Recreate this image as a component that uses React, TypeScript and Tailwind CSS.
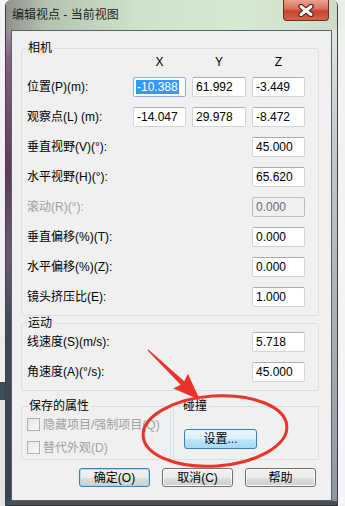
import React from 'react';

const FONT = "[font-family:'Liberation_Sans','Noto_Sans_CJK_SC',sans-serif]";

type Row = { label: string; values: string[]; disabled?: boolean };

const cameraRows: Row[] = [
  { label: '位置(P)(m):', values: ['-10.388', '61.992', '-3.449'] },
  { label: '观察点(L) (m):', values: ['-14.047', '29.978', '-8.472'] },
  { label: '垂直视野(V)(°):', values: ['45.000'] },
  { label: '水平视野(H)(°):', values: ['65.620'] },
  { label: '滚动(R)(°):', values: ['0.000'], disabled: true },
  { label: '垂直偏移(%)(T):', values: ['0.000'] },
  { label: '水平偏移(%)(Z):', values: ['0.000'] },
  { label: '镜头挤压比(E):', values: ['1.000'] },
];

const motionRows: Row[] = [
  { label: '线速度(S)(m/s):', values: ['5.718'] },
  { label: '角速度(A)(°/s):', values: ['45.000'] },
];

const GRID = 'grid grid-cols-[100px_53px_54px_53px] gap-x-[6px]';

const TextBox: React.FC<{ value: string; selected?: boolean; disabled?: boolean; className?: string }> = ({
  value,
  selected,
  disabled,
  className = '',
}) => {
  const look = disabled
    ? 'bg-[#f0f0f0] border-[#b9bcc0] text-[#6d6d6d]'
    : selected
      ? 'bg-white border-[#8fb0d3] text-black'
      : 'bg-white border-[#d0d5da] border-t-[#abadb3] text-black';
  return (
    <div className={`h-[20px] flex items-center px-[3px] border rounded-[2px] text-[12px] leading-[14px] ${look} ${className}`}>
      {selected ? <span className="bg-[#3399ff] text-white -ml-[1px] px-[1px] leading-[14px]">{value}</span> : value}
    </div>
  );
};

const Group: React.FC<{ title: string; className?: string; legendClass?: string; children: React.ReactNode }> = ({
  title,
  className = '',
  legendClass = '',
  children,
}) => (
  <fieldset className={`border border-[#d5dfe5] rounded-[3px] px-[4px] ${className}`}>
    <legend className={`px-[2px] text-[12px] leading-[13px] text-black ${legendClass}`}>{title}</legend>
    {children}
  </fieldset>
);

const Rows: React.FC<{ rows: Row[] }> = ({ rows }) => (
  <div className={`${GRID} gap-y-[10px] pl-[1px]`}>
    {rows.map((row) => (
      <React.Fragment key={row.label}>
        <div className={`col-start-1 h-[20px] flex items-center whitespace-nowrap text-[12px] ${row.disabled ? 'text-[#a0a0a0]' : 'text-black'}`}>
          {row.label}
        </div>
        {row.values.length === 3 ? (
          row.values.map((v, i) => <TextBox key={v} value={v} selected={row.label.startsWith('位置') && i === 0} />)
        ) : (
          <TextBox value={row.values[0]} disabled={row.disabled} className="col-start-4" />
        )}
      </React.Fragment>
    ))}
  </div>
);

const Checkbox: React.FC<{ label: string }> = ({ label }) => (
  <div className="h-[15px] flex items-center pl-[1px]">
    <div className="w-[13px] h-[13px] border border-[#b1b1b1] bg-gradient-to-br from-[#e6e6e6] to-[#fafafa]" />
    <span className="ml-[3px] text-[12px] text-[#a0a0a0] whitespace-nowrap">{label}</span>
  </div>
);

const Button: React.FC<{ label: string; variant?: 'normal' | 'default' | 'hot'; className?: string }> = ({
  label,
  variant = 'normal',
  className = '',
}) => {
  const look =
    variant === 'hot'
      ? 'border-[#3c7fb1] bg-[linear-gradient(180deg,#eaf6fd_0%,#d9f0fc_50%,#bee6fd_51%,#a7d9f5_100%)]'
      : variant === 'default'
        ? 'border-[#3c7fb1] bg-[linear-gradient(180deg,#f2f2f2_0%,#ebebeb_50%,#dddddd_51%,#cfcfcf_100%)] shadow-[inset_0_0_0_1px_#a6dcf5]'
        : 'border-[#707070] bg-[linear-gradient(180deg,#f2f2f2_0%,#ebebeb_50%,#dddddd_51%,#cfcfcf_100%)] shadow-[inset_0_0_0_1px_#fcfcfc]';
  return (
    <div className={`flex items-center justify-center border rounded-[3px] text-[12px] text-black ${look} ${className}`}>
      {label}
    </div>
  );
};

const App: React.FC = () => {
  return (
    <div className={`relative w-[345px] h-[506px] overflow-hidden bg-white flex ${FONT}`}>
      <div className="w-[5px] h-full bg-[linear-gradient(180deg,#f3f3f3_0px,#eeeeee_382px,#3e4d5c_382px,#3e4d5c_400px,#e4e4e4_400px)]" />

      <div className="w-[333px] h-[506px] flex flex-col border-x border-[#3b4147] rounded-t-[6px] overflow-hidden">
        <div className="h-[30px] flex bg-[linear-gradient(90deg,#8f918c_0%,#b4c3af_12%,#cde3c9_40%,#d6e9d2_70%,#ccdcc8_100%)]">
          <div className="pl-[6px] h-full flex items-center text-[12px] text-[#1c1c1c] whitespace-nowrap">编辑视点 - 当前视图</div>
          <div className="ml-auto mr-[8px] w-[46px] h-[21px] flex items-center justify-center rounded-b-[4px] border border-t-0 border-[#6b2b22] bg-[linear-gradient(180deg,#e9a28e_0%,#d9705a_45%,#c8412a_55%,#d4624a_100%)]">
            <svg width="18" height="13" viewBox="0 0 18 13">
              <path d="M4 2.5 L14 10.5 M14 2.5 L4 10.5" stroke="#4a2520" strokeWidth="5.4" strokeLinecap="round" />
              <path d="M4 2.5 L14 10.5 M14 2.5 L4 10.5" stroke="#ffffff" strokeWidth="3" strokeLinecap="round" />
            </svg>
          </div>
        </div>

        <div className="flex h-[471px]">
          <div className="w-[5px] bg-[linear-gradient(180deg,#9b8e98_0%,#8a5f80_6%,#5f3a56_30%,#6d5a73_48%,#404a55_62%,#39434d_100%)]" />
          <div className="w-[321px] border border-[#56616b] bg-[#f0f0f0] pt-[11px]">
            <Group title="相机" className="ml-[9px] w-[298px] pb-[8px]">
              <div className={`${GRID} h-[14px] mb-[8px] pl-[1px] text-[12px] leading-[14px] text-black`}>
                <div className="col-start-2 text-center">X</div>
                <div className="text-center">Y</div>
                <div className="text-center">Z</div>
              </div>
              <Rows rows={cameraRows} />
            </Group>

            <Group title="运动" className="ml-[9px] mt-[1px] w-[298px] pt-[2px] pb-[8px]">
              <Rows rows={motionRows} />
            </Group>

            <div className="ml-[9px] mt-[9px] w-[298px] flex gap-[2px]">
              <Group title="保存的属性" className="w-[150px] pt-[4px] pb-[4px]" legendClass="ml-[1px]">
                <div className="flex flex-col gap-[8px]">
                  <Checkbox label="隐藏项目/强制项目(Q)" />
                  <Checkbox label="替代外观(D)" />
                </div>
              </Group>
              <Group title="碰撞" className="flex-1" legendClass="ml-[3px]">
                <Button label="设置..." variant="hot" className="ml-[6px] mt-[16px] w-[73px] h-[20px]" />
              </Group>
            </div>

            <div className="mt-[8px] pr-[15px] flex justify-end gap-[12px]">
              <Button label="确定(O)" variant="default" className="w-[71px] h-[19px]" />
              <Button label="取消(C)" className="w-[71px] h-[19px]" />
              <Button label="帮助" className="w-[71px] h-[19px]" />
            </div>
          </div>
          <div className="w-[5px] bg-[linear-gradient(180deg,#dfe6dd_0%,#c8cdd1_20%,#aab1b7_60%,#8f979e_100%)]" />
        </div>
        <div className="h-[5px] bg-[#474f57] border-b border-[#2c3136]" />
      </div>

      <div className="w-[7px] h-full bg-[linear-gradient(180deg,#e9efe6_0%,#f2f2f2_15%,#f5f5f5_100%)]" />

      <svg className="absolute inset-0 pointer-events-none" width="345" height="506" viewBox="0 0 345 506">
        <ellipse cx="215" cy="431" rx="72" ry="35" transform="rotate(-4 215 431)" fill="none" stroke="#e8342a" strokeWidth="3" />
        <polygon
          points="147.6,350.5 180.6,384.8 173.3,388.6 200,400 187.9,373.8 184.2,381.2 148.4,349.5"
          fill="#e8342a"
        />
      </svg>
    </div>
  );
};

export default App;
